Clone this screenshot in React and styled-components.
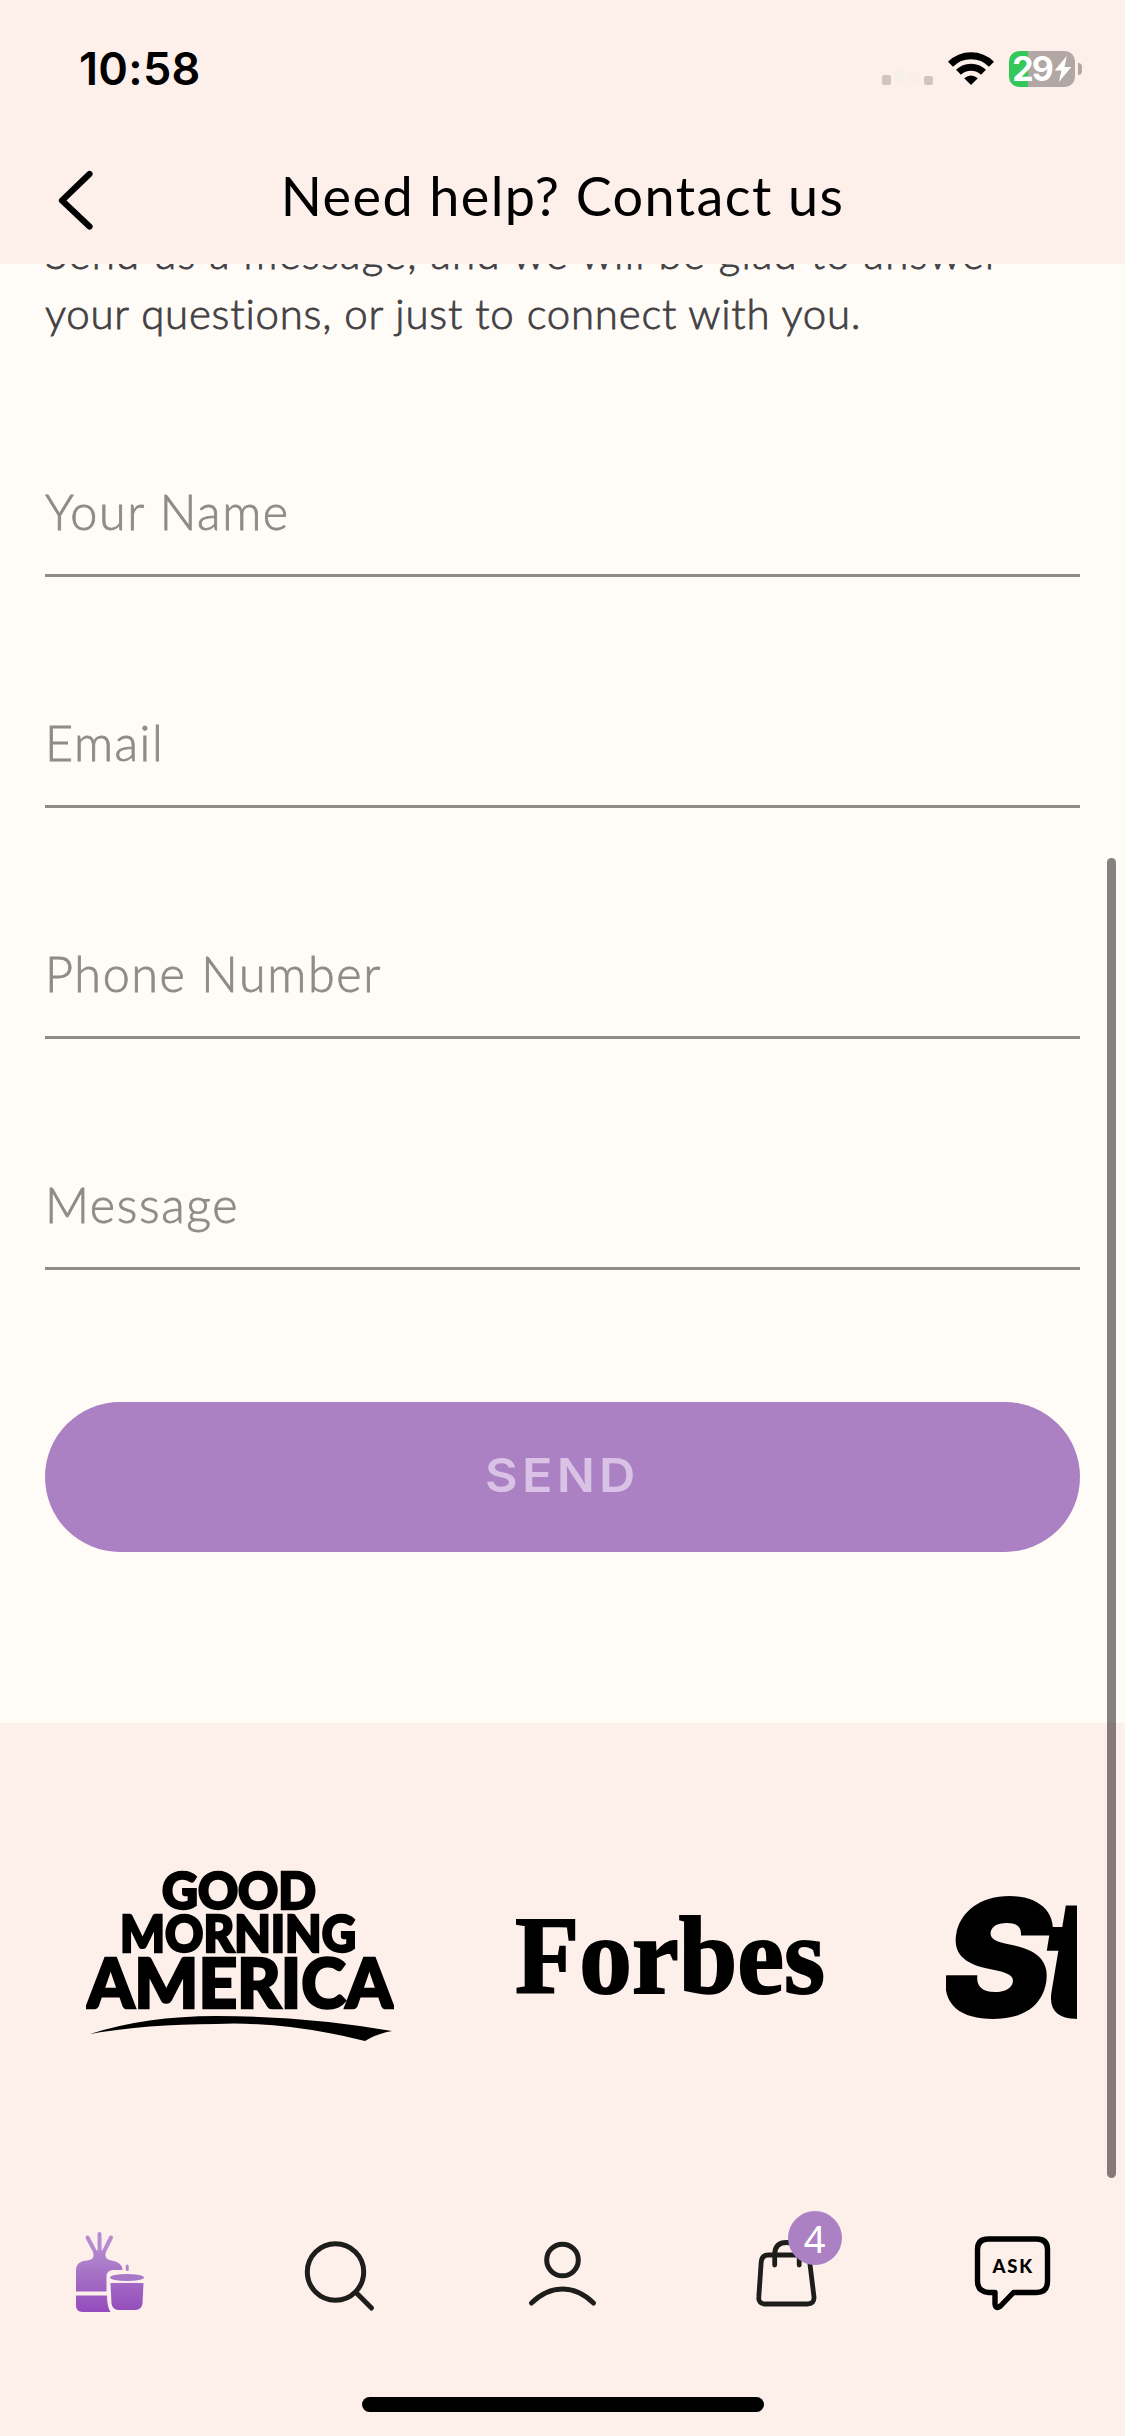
import React, { useState } from 'react';
import styled, { createGlobalStyle } from 'styled-components';

const GlobalStyle = createGlobalStyle`
    * {
        box-sizing: border-box;
    }
    body {
        margin: 0;
        background: #fffcf7;
    }
`

const Screen = styled.div`
    position: relative;
    display: flex;
    flex-direction: column;
    width: 1125px;
    height: 2436px;
    overflow: hidden;
    background: #fffcf7;
    font-family: Lato, 'Open Sans', sans-serif;
`

const Top = styled.header`
    height: 264px;
    flex-shrink: 0;
    background: #fdefea;
`

const StatusBar = styled.div`
    display: flex;
    justify-content: space-between;
    align-items: center;
    height: 138px;
    padding: 0 43px 0 79px;
`

const Time = styled.span`
    font-family: Inter, sans-serif;
    font-size: 45px;
    font-weight: 600;
    line-height: 54px;
    letter-spacing: 0.3px;
    color: #000;
`

const StatusIcons = styled.div`
    display: flex;
    align-items: center;
`

const Signal = styled.svg`
    width: 52px;
    height: 36px;
    margin-right: 13px;
`

const Wifi = styled.svg`
    width: 48px;
    height: 36px;
    margin-right: 14px;
`

const Battery = styled.div`
    display: flex;
    align-items: center;
    justify-content: center;
    gap: 2px;
    width: 66px;
    height: 36px;
    border-radius: 10px;
    background: linear-gradient(to right, #34c759 19px, #b1a8a5 19px);
    color: #fff;
    font-family: Inter, sans-serif;
    font-size: 34px;
    font-weight: 700;
    letter-spacing: -2px;
    line-height: 36px;
`

const Bolt = styled.svg`
    width: 18px;
    height: 26px;
`

const BatteryTip = styled.div`
    width: 4px;
    height: 12px;
    margin-left: 3px;
    border-radius: 0 6px 6px 0;
    background: #b1a8a5;
`

const TitleBar = styled.div`
    display: grid;
    grid-template-columns: 150px 1fr 150px;
    align-items: center;
    height: 126px;
    padding-bottom: 8px;
`

const BackButton = styled.button`
    display: flex;
    margin: 6px 0 0 55px;
    padding: 0;
    border: 0;
    background: none;
    cursor: pointer;
`

const Title = styled.h1`
    margin: -3px 0 0;
    text-align: center;
    font-size: 54px;
    font-weight: 400;
    line-height: 64px;
    letter-spacing: 1.4px;
    color: #000;
`

const Content = styled.main`
    flex: 1;
    overflow: hidden;
    padding: 0 45px;
`

const Intro = styled.p`
    display: flex;
    flex-direction: column;
    margin: -41px 0 0;
    font-size: 42px;
    font-weight: 300;
    line-height: 60px;
    white-space: nowrap;
    color: #434044;
    -webkit-text-stroke: 0.8px #434044;
`

const IntroLine = styled.span`
    letter-spacing: ${props => props.$spacing};
`

const Form = styled.form`
    display: flex;
    flex-direction: column;
    margin-top: 3px;
`

const Field = styled.label`
    display: flex;
    align-items: flex-end;
    height: 231px;
`

const Input = styled.input`
    width: 100%;
    height: 96px;
    padding: 0 0 34px;
    border: 0;
    border-bottom: 3px solid #8f8b88;
    border-radius: 0;
    outline: none;
    background: transparent;
    font-family: inherit;
    font-size: 48.5px;
    font-weight: 300;
    line-height: 59px;
    letter-spacing: 1.6px;
    color: #434044;
    &::placeholder {
        color: #8f8b88;
        opacity: 1;
        -webkit-text-stroke: 0.8px #8f8b88;
    }
`

const SendButton = styled.button`
    height: 150px;
    margin-top: 132px;
    padding: 0 0 5px;
    border: 0;
    border-radius: 75px;
    background: #ab81c3;
    color: #d9c2e5;
    font-family: Inter, sans-serif;
    font-size: 47px;
    font-weight: 600;
    letter-spacing: 4px;
    cursor: pointer;
`

const SendLabel = styled.span`
    display: inline-block;
    transform: scaleX(1.07);
`

const Press = styled.section`
    display: flex;
    align-items: center;
    flex-shrink: 0;
    height: 461px;
    padding: 4px 48px 0 86px;
    overflow: hidden;
    background: #fdefea;
`

const LogoStrip = styled.div`
    display: flex;
    align-items: center;
    gap: 122px;
    width: 991px;
    overflow: hidden;
    svg {
        flex-shrink: 0;
    }
`

const Nav = styled.nav`
    display: flex;
    flex-shrink: 0;
    height: 180px;
    background: #fdefea;
`

const NavItem = styled.a`
    display: flex;
    flex: 1;
    justify-content: center;
    padding-top: 38px;
`

const IconHolder = styled.span`
    position: relative;
    width: 100px;
    height: 100px;
`

const Badge = styled.span`
    position: absolute;
    top: -11px;
    left: 50px;
    display: flex;
    align-items: center;
    justify-content: center;
    width: 54px;
    height: 54px;
    border-radius: 50%;
    background: #ab81c3;
    color: #fff;
    font-family: 'Noto Sans', sans-serif;
    font-size: 38px;
    line-height: 54px;
`

const HomeArea = styled.div`
    display: flex;
    justify-content: center;
    flex-shrink: 0;
    height: 72px;
    padding-top: 33px;
    background: #fdefea;
`

const HomeIndicator = styled.div`
    width: 402px;
    height: 15px;
    border-radius: 8px;
    background: #000;
`

const ScrollThumb = styled.div`
    position: absolute;
    top: 858px;
    right: 9px;
    width: 9px;
    height: 1320px;
    border-radius: 5px;
    background: rgba(8, 0, 0, 0.49);
`

const SignalIcon = () => (
    <Signal viewBox="0 0 52 36">
        <rect x="0" y="24" width="9" height="10" rx="2.5" fill="#d1c4c0" />
        <rect x="13" y="19" width="9" height="15" rx="2.5" fill="#f7efea" />
        <rect x="28" y="21" width="9" height="13" rx="2.5" fill="#faeeea" />
        <rect x="42" y="25" width="9" height="9" rx="2.5" fill="#d1c4c0" />
    </Signal>
)

const WifiIcon = () => (
    <Wifi viewBox="0 0 48 36">
        <g fill="none" stroke="#000" strokeWidth="7">
            <path d="M3.5 13.2 A29 29 0 0 1 44.5 13.2" />
            <path d="M11.5 21.3 A17.7 17.7 0 0 1 36.5 21.3" />
        </g>
        <path d="M24 34 L17.2 27.2 Q24 21.6 30.8 27.2 Z" />
    </Wifi>
)

const GoodMorningAmerica = () => (
    <svg width="308" height="174" viewBox="0 0 308 174">
        <g fontFamily="Lato, sans-serif" fontWeight="900" stroke="#000" strokeWidth="2.6">
            <text x="76" y="40" fontSize="52" textLength="154" lengthAdjust="spacingAndGlyphs">GOOD</text>
            <text x="34" y="83" fontSize="52" textLength="236" lengthAdjust="spacingAndGlyphs">MORNING</text>
            <text x="1" y="139" fontSize="69" textLength="306" lengthAdjust="spacingAndGlyphs">AMERICA</text>
        </g>
        <path d="M4 165 Q60 147 130 147 Q220 147 306 162 Q290 165 279 172 Q200 152 130 155 Q60 155 4 165 Z" />
    </svg>
)

const Forbes = () => (
    <svg width="308" height="174" viewBox="0 0 308 174">
        <text
            x="-1"
            y="124"
            fontFamily="'Liberation Serif', serif"
            fontWeight="700"
            fontSize="111"
            stroke="#000"
            strokeWidth="2"
            textLength="310"
            lengthAdjust="spacingAndGlyphs"
        >
            Forbes
        </text>
    </svg>
)

const StyleLogo = () => (
    <svg width="308" height="174" viewBox="0 0 308 174">
        <text
            x="-4"
            y="148.5"
            fontFamily="Inter, sans-serif"
            fontWeight="900"
            fontStyle="italic"
            fontSize="166"
            letterSpacing="-11"
        >
            St
        </text>
    </svg>
)

const ShopIcon = () => (
    <svg width="100" height="100" viewBox="0.5 -0.5 100 100">
        <defs>
            <linearGradient id="shop" gradientUnits="userSpaceOnUse" x1="0" y1="10" x2="0" y2="90">
                <stop offset="0" stopColor="#b98fd0" />
                <stop offset="0.35" stopColor="#ad7fc9" />
                <stop offset="1" stopColor="#944bbd" />
            </linearGradient>
        </defs>
        <g stroke="#b78bd0" strokeWidth="4" strokeLinecap="round">
            <path d="M37 11.5 L37.1 31" />
            <path d="M25 15 L33 30" />
            <path d="M48.5 15 L41 30" />
        </g>
        <path
            d="M31 28 H43 V33 Q43 37 49 38 Q60 40 60 47.5 H51 Q44 47.5 44 54 V69 H13.5 V48 Q13.5 38.5 25 38 Q31 37 31 33 Z"
            fill="url(#shop)"
        />
        <path d="M13.5 73 H44.5 Q44.5 84 48 89.5 H20 Q13.5 89.5 13.5 83 Z" fill="url(#shop)" />
        <path d="M64.7 43.5 V47" stroke="#b184cc" strokeWidth="3" strokeLinecap="round" />
        <ellipse cx="64.5" cy="55" rx="17" ry="3.5" fill="#a878c8" />
        <path d="M48 60.5 H81 L80 81 Q79 87.5 73 87.5 H56 Q50 87.5 49 81 Z" fill="url(#shop)" />
    </svg>
)

const SearchIcon = () => (
    <svg width="100" height="100" viewBox="0.5 0 100 100" fill="none" stroke="#1d1d1b" strokeWidth="5" strokeLinecap="round">
        <circle cx="48" cy="50" r="28.2" />
        <path d="M68.5 70.5 L84 86" />
    </svg>
)

const UserIcon = () => (
    <svg width="100" height="100" viewBox="0.5 0 100 100" fill="none" stroke="#1d1d1b" strokeWidth="5" strokeLinecap="round">
        <circle cx="50" cy="38" r="15.8" />
        <path d="M19 81 Q33.5 67 50 67 Q66.5 67 81 81" />
    </svg>
)

const BagIcon = () => (
    <svg width="100" height="100" viewBox="0 0 100 100" fill="none" stroke="#1d1d1b" strokeWidth="4.8" strokeLinecap="round">
        <path d="M30 33 H65 Q71 33 71.7 40 L76 75 Q76.5 82 69 82 H28 Q20 82 20.800 75 L23.2 40 Q24 33 30 33 Z" />
        <path d="M36.7 43 V32 Q37 20.5 48.5 20.5 Q61 20.5 61.2 32 V43" />
    </svg>
)

const AskIcon = () => (
    <svg width="100" height="100" viewBox="0.5 -0.5 100 100">
        <path
            d="M26 16.5 H74 Q85 16.5 85 27 V58.5 Q85 70 74 70 H51 L38 83.5 Q32.8 87.5 32.5 81 V70 H26 Q15 69 15 58.5 V27 Q15 16.5 26 16.5 Z"
            fill="none"
            stroke="#000"
            strokeWidth="5.4"
            strokeLinejoin="round"
        />
        <text x="30" y="50" fontFamily="Lato, sans-serif" fontWeight="900" fontSize="18.5" textLength="39.5">ASK</text>
    </svg>
)

const fields = ['Your Name', 'Email', 'Phone Number', 'Message'];

const App = () => {
    const [values, setValues] = useState({});

    return (
        <>
            <GlobalStyle />
            <Screen>
                <Top>
                    <StatusBar>
                        <Time>10:58</Time>
                        <StatusIcons>
                            <SignalIcon />
                            <WifiIcon />
                            <Battery>
                                29
                                <Bolt viewBox="0 0 16 25">
                                    <path d="M11.5 0 L0 14 H6.5 L4 25 L16 10.5 H9.5 Z" fill="#fff" />
                                </Bolt>
                            </Battery>
                            <BatteryTip />
                        </StatusIcons>
                    </StatusBar>
                    <TitleBar>
                        <BackButton aria-label="Back">
                            <svg width="40" height="62" viewBox="0 0 40 62" fill="none" stroke="#000" strokeWidth="6.2" strokeLinecap="round" strokeLinejoin="round">
                                <path d="M34.5 5 L7 31.5 L34.5 57.5" />
                            </svg>
                        </BackButton>
                        <Title>Need help? Contact us</Title>
                    </TitleBar>
                </Top>
                <Content>
                    <Intro>
                        <IntroLine $spacing="1.27px">Send us a message, and we will be glad to answer</IntroLine>
                        <IntroLine $spacing="0.76px">your questions, or just to connect with you.</IntroLine>
                    </Intro>
                    <Form onSubmit={e => e.preventDefault()}>
                        {fields.map(name => (
                            <Field key={name}>
                                <Input
                                    placeholder={name}
                                    value={values[name] || ''}
                                    onChange={e => setValues({ ...values, [name]: e.target.value })}
                                />
                            </Field>
                        ))}
                        <SendButton>
                            <SendLabel>SEND</SendLabel>
                        </SendButton>
                    </Form>
                </Content>
                <Press>
                    <LogoStrip>
                        <GoodMorningAmerica />
                        <Forbes />
                        <StyleLogo />
                    </LogoStrip>
                </Press>
                <Nav>
                    <NavItem><ShopIcon /></NavItem>
                    <NavItem><SearchIcon /></NavItem>
                    <NavItem><UserIcon /></NavItem>
                    <NavItem>
                        <IconHolder>
                            <BagIcon />
                            <Badge>4</Badge>
                        </IconHolder>
                    </NavItem>
                    <NavItem><AskIcon /></NavItem>
                </Nav>
                <HomeArea>
                    <HomeIndicator />
                </HomeArea>
                <ScrollThumb />
            </Screen>
        </>
    )
}

export default App
